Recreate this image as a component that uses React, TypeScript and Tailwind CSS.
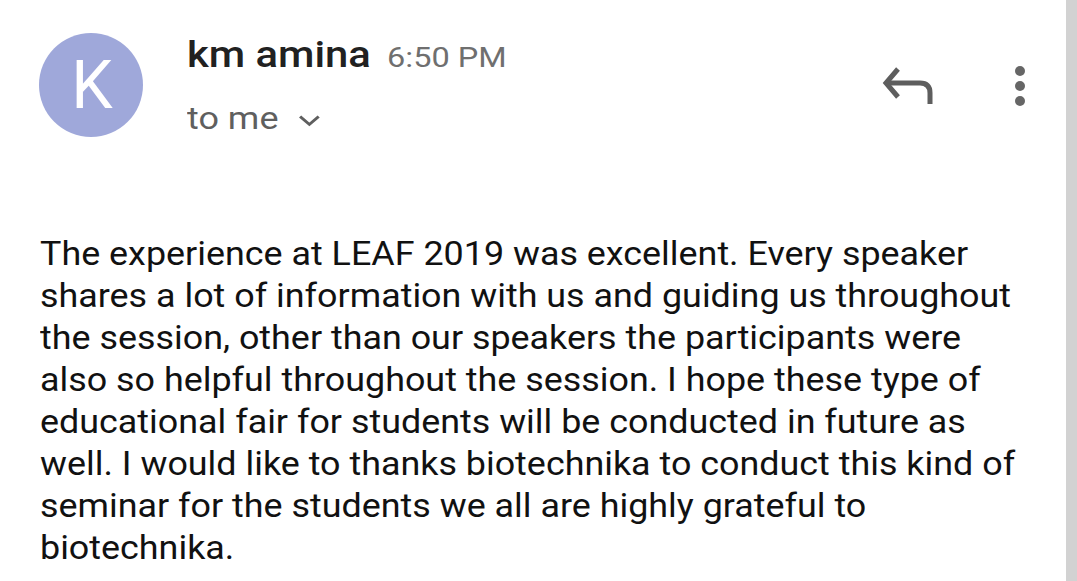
import React from "react";

const lines = [
  "The experience at LEAF 2019 was excellent. Every speaker",
  "shares a lot of information with us and guiding us throughout",
  "the session, other than our speakers the participants were",
  "also so helpful throughout the session. I hope these type of",
  "educational fair for students will be conducted in future as",
  "well. I would like to thanks biotechnika to conduct this kind of",
  "seminar for the students we all are highly grateful to",
  "biotechnika.",
];

export default function App() {
  return (
    <div className="flex h-[581px] w-[1077px] overflow-hidden bg-white" style={{ fontFamily: "Roboto, 'Noto Sans', sans-serif" }}>
      <div className="flex min-w-0 flex-1 flex-col">
        <div className="flex items-start pl-[39px] pt-[33px]">
          <div className="flex h-[104px] w-[104px] shrink-0 items-center justify-center rounded-full bg-[#9fa8da] pl-[2px] pt-[2px] text-[66px] leading-none text-white">
            K
          </div>
          <div className="ml-[44px] flex origin-left scale-x-[1.16] flex-col">
            <div className="flex items-baseline">
              <span className="whitespace-nowrap text-[36px] font-medium leading-[44px] text-[#212121]">km amina</span>
              <span className="ml-[14px] whitespace-nowrap text-[28px] text-[#6f6f6f]">6:50 PM</span>
            </div>
            <div className="mt-[22px] flex items-center text-[#5f5f5f]">
              <span className="whitespace-nowrap text-[31px] leading-[36px]">to me</span>
              <svg className="ml-[17px] mt-[4px]" width="19" height="12" viewBox="0 0 19 12" fill="none" stroke="#5f5f5f" strokeWidth="2.6">
                <path d="M1.5 1.5 L9.5 9.5 L17.5 1.5" />
              </svg>
            </div>
          </div>
          <div className="ml-auto mr-[41px] mt-[30px] flex items-start">
            <svg width="56" height="44" viewBox="0 0 56 44" fill="none" stroke="#5e5e5e" strokeWidth="5">
              <path d="M18 6 L6 20 L18 34" />
              <path d="M6 20 H40 Q50 20 50 30 V41" />
            </svg>
            <div className="ml-[79px] mt-[3px] flex flex-col gap-[5px]">
              <div className="h-[10px] w-[10px] rounded-full bg-[#666666]" />
              <div className="h-[10px] w-[10px] rounded-full bg-[#666666]" />
              <div className="h-[10px] w-[10px] rounded-full bg-[#666666]" />
            </div>
          </div>
        </div>
        <div className="mt-[95px] pl-[40px]">
          <p className="origin-left scale-x-[1.055] whitespace-nowrap text-[34px] leading-[42px] text-[#111111]">
            {lines.map((l, i) => (
              <React.Fragment key={i}>
                {l}
                {i < lines.length - 1 && <br />}
              </React.Fragment>
            ))}
          </p>
        </div>
      </div>
      <div className="w-[11px] shrink-0 bg-[#d2d2d2]" />
    </div>
  );
}
